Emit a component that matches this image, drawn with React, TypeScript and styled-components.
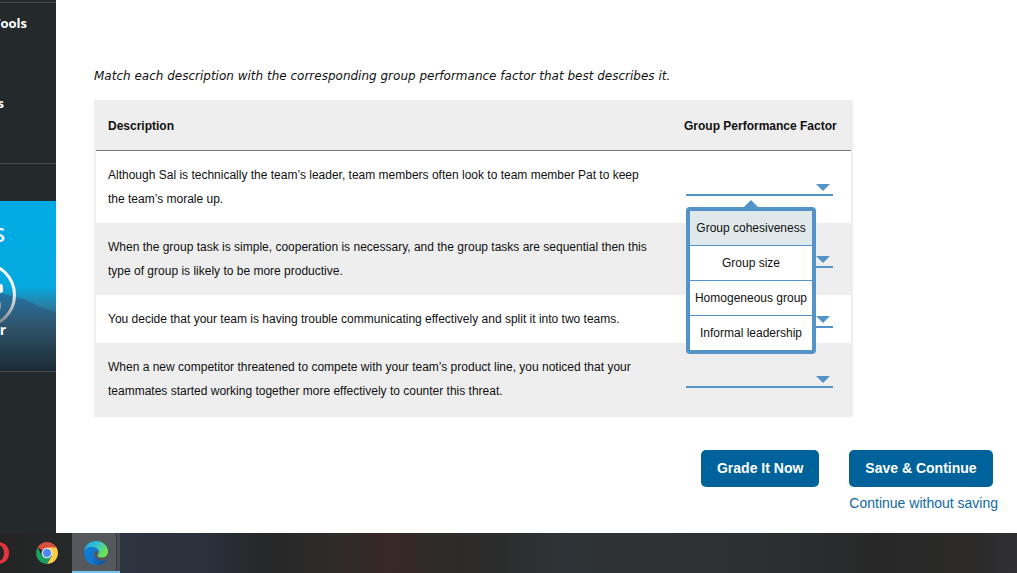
import React, { useState } from "react";
import styled, { createGlobalStyle } from "styled-components";

const Global = createGlobalStyle`
  *, *::before, *::after { box-sizing: border-box; }
  body { margin: 0; background: #fff; color: #111; font-family: "Liberation Sans", Arial, sans-serif; }
`;

const Screen = styled.div`
  min-height: 100vh;
  display: flex;
  flex-direction: column;
`;

const Page = styled.div`
  flex: 1;
  display: flex;
`;

const Sidebar = styled.nav`
  width: 56px;
  flex: none;
  overflow: hidden;
  background: #24292c;
  padding-top: 2px;
`;

const SideGroup = styled.div`
  height: 161px;
  border-top: 1px solid #44494d;
  padding-top: 10px;
`;

const SideLink = styled.a<{ $width: number }>`
  display: flex;
  justify-content: flex-end;
  width: ${(p) => p.$width}px;
  height: 80px;
  white-space: nowrap;
  color: #fff;
  font: 700 13px/20px "Open Sans", sans-serif;
  text-decoration: none;
`;

const SideGap = styled.div`
  height: 38px;
  border-top: 1px solid #44494d;
`;

const Promo = styled.a`
  display: block;
  position: relative;
  height: 171px;
  border-bottom: 1px solid #44494d;
  overflow: hidden;
  color: #fff;
  text-decoration: none;

  svg { display: block; width: 56px; height: 170px; }
`;

const PromoTitle = styled.span`
  position: absolute;
  top: 22px;
  right: 51px;
  font: 600 20px/24px "Open Sans", sans-serif;
`;

const PromoCaption = styled.span`
  position: absolute;
  top: 119px;
  right: 50px;
  font: 700 14px/20px "Open Sans", sans-serif;
  white-space: nowrap;
`;

const Main = styled.main`
  flex: 1;
  min-width: 0;
  padding: 66px 19px 20px 38px;
`;

const Prompt = styled.p`
  margin: 0 0 14px;
  font: italic 12px/20px Verdana, "DejaVu Sans", sans-serif;
`;

const Table = styled.table`
  width: 81%;
  min-width: 759px;
  border: 2px solid #eee;
  border-spacing: 0;
  font-size: 12px;
  line-height: 24px;
`;

const HeadCell = styled.th`
  height: 49px;
  padding: 0 12px;
  background: #eee;
  border-bottom: 1px solid #777;
  text-align: left;
  white-space: nowrap;
`;

const Row = styled.tr`
  &:nth-child(even) { background: #eee; }
`;

const Cell = styled.td`
  padding: 12px 20px 12px 12px;
  vertical-align: middle;
`;

const FactorHead = styled(HeadCell)`
  width: 179px;
`;

const Picker = styled.div`
  position: relative;
  width: 147px;
  height: 18px;
`;

const PickerCell = styled(Cell)`
  padding: 0 14px;
`;

const Select = styled.select`
  appearance: none;
  display: block;
  width: 100%;
  height: 18px;
  border: 0;
  border-bottom: 2px solid #5493c8;
  border-radius: 0;
  background: transparent;
  font: 12px/16px "Liberation Sans", Arial, sans-serif;
  outline: none;
`;

const Caret = styled.span`
  position: absolute;
  top: 6px;
  right: 3px;
  border: 7px solid transparent;
  border-top-color: #5493c8;
  border-bottom: 0;
  pointer-events: none;
`;

const Menu = styled.div`
  position: absolute;
  z-index: 1;
  top: 29px;
  left: 0;
  width: 130px;
  border: 4px solid #5493c8;
  border-radius: 4px;
  background: #fff;

  &::before {
    content: "";
    position: absolute;
    bottom: 100%;
    left: 54px;
    margin-bottom: 4px;
    border: 7px solid transparent;
    border-bottom-color: #5493c8;
    border-top: 0;
  }
`;

const Option = styled.button<{ $active?: boolean }>`
  display: block;
  width: 100%;
  height: 35px;
  padding: 0;
  border: 0;
  border-bottom: 1px solid #5493c8;
  background: ${(p) => (p.$active ? "#dfe8ea" : "#fff")};
  color: #111;
  font: 12px/34px "Liberation Sans", Arial, sans-serif;
  text-align: center;
  white-space: nowrap;

  &:last-child { height: 34px; border-bottom: 0; }
`;

const Actions = styled.div`
  display: flex;
  justify-content: flex-end;
  align-items: flex-start;
  gap: 30px;
  margin-top: 33px;
`;

const SaveColumn = styled.div`
  display: flex;
  flex-direction: column;
  align-items: flex-start;
  gap: 6px;
`;

const Button = styled.button`
  height: 37px;
  padding: 0 16px 2px;
  border: 0;
  border-radius: 5px;
  background: #00629b;
  color: #fff;
  font: 700 14px/20px "Liberation Sans", Arial, sans-serif;
`;

const SkipLink = styled.a`
  color: #10699f;
  font-size: 14px;
  line-height: 20px;
  text-decoration: none;
`;

const Taskbar = styled.footer`
  display: flex;
  height: 40px;
  background: linear-gradient(90deg, #242424 0, #26282a 7%, #2c3440 12%, #2b303c 20%, #262728 26%, #2e2b29 33%, #382826 38%, #2f2b28 43%, #2b2c2b 48%, #2e3337 55%, #2c3032 75%, #282828 86%, #2b2a29 95%, #302f33 100%);
`;

const TaskButton = styled.button<{ $active?: boolean; $align?: string; $width: number }>`
  display: flex;
  align-items: center;
  justify-content: ${(p) => p.$align ?? "center"};
  width: ${(p) => p.$width}px;
  padding: ${(p) => (p.$active ? "2px 0 0" : "0")};
  border: 0;
  border-bottom: ${(p) => (p.$active ? "2px solid #76c8f0" : "0")};
  background: ${(p) => (p.$active ? "linear-gradient(90deg, #55585c 44px, #34393f 44px, #34393f 45px, #494d52 45px)" : "transparent")};
`;

const factors = ["Group cohesiveness", "Group size", "Homogeneous group", "Informal leadership"];

const descriptions = [
  "Although Sal is technically the team’s leader, team members often look to team member Pat to keep the team’s morale up.",
  "When the group task is simple, cooperation is necessary, and the group tasks are sequential then this type of group is likely to be more productive.",
  "You decide that your team is having trouble communicating effectively and split it into two teams.",
  "When a new competitor threatened to compete with your team’s product line, you noticed that your teammates started working together more effectively to counter this threat.",
];

function FactorPicker({ label, initiallyOpen }: { label: string; initiallyOpen: boolean }) {
  const [open, setOpen] = useState(initiallyOpen);
  const [value, setValue] = useState("");
  return (
    <Picker>
      <Select aria-label={label} value={value} onChange={(e) => setValue(e.target.value)}>
        <option value="" />
        {factors.map((f) => <option key={f}>{f}</option>)}
      </Select>
      <Caret />
      {open && (
        <Menu>
          {factors.map((f, i) => (
            <Option key={f} type="button" $active={i === 0} onClick={() => { setValue(f); setOpen(false); }}>{f}</Option>
          ))}
        </Menu>
      )}
    </Picker>
  );
}

const PromoArt = () => (
  <svg viewBox="0 0 56 170" aria-hidden="true">
    <defs>
      <linearGradient id="sky" x1="0" y1="0" x2="0" y2="1">
        <stop offset="0" stopColor="#00abe4" />
        <stop offset=".5" stopColor="#04a9e0" />
        <stop offset=".62" stopColor="#2b7da3" />
        <stop offset="1" stopColor="#1d2a33" />
      </linearGradient>
      <linearGradient id="hill" x1="0" y1="0" x2="0" y2="1">
        <stop offset="0" stopColor="#2373a5" />
        <stop offset=".4" stopColor="#30566f" />
        <stop offset="1" stopColor="#1c2a33" />
      </linearGradient>
      <linearGradient id="ring" x1="0" y1="0" x2="0" y2="1">
        <stop offset=".4" stopColor="#fff" />
        <stop offset="1" stopColor="#777c80" />
      </linearGradient>
    </defs>
    <path fill="url(#sky)" d="M0 0h56v170H0z" />
    <path fill="url(#hill)" d="M0 92l12 3 14 4 12 6 18 6v59H0z" />
    <circle cx="-17" cy="94" r="31.5" fill="none" stroke="url(#ring)" strokeWidth="3" />
    <rect x="-8" y="83" width="11" height="9" rx="3" fill="#fff" />
    <rect x="-8" y="100" width="9" height="9" rx="3" fill="#9a9da0" />
  </svg>
);

const OperaIcon = () => (
  <svg width="9" height="24" viewBox="0 0 9 24" aria-hidden="true">
    <path fill="#e5343c" d="M-3 1C5 1 9 6 9 12S5 23-3 23v-2.500C2 20.500 4 16 4 12S2 3.500-3 3.500z" />
  </svg>
);

const ChromeIcon = () => (
  <svg width="24" height="24" viewBox="0 0 24 24" aria-hidden="true">
    <path fill="#d9503f" d="M12 12L2.500 6.500A11 11 0 0 1 21.500 6.500z" />
    <path fill="#ffce44" d="M12 6.500h9.500A11 11 0 0 1 12 23l4.800-8.300z" />
    <path fill="#1a9f60" d="M2.500 6.500A11 11 0 0 0 12 23l4.800-8.300L12 12 7.200 14.700z" />
    <circle cx="12" cy="12" r="5.3" fill="#f1f1f1" />
    <circle cx="12" cy="12" r="4.2" fill="#4c8bf5" />
  </svg>
);

const EdgeIcon = () => (
  <svg width="24" height="24" viewBox="0 0 24 24" aria-hidden="true">
    <defs>
      <linearGradient id="edgeTop" x1="0" y1="0" x2="1" y2=".5">
        <stop offset="0" stopColor="#1d9fe0" />
        <stop offset=".5" stopColor="#33c1d6" />
        <stop offset="1" stopColor="#6fe34c" />
      </linearGradient>
      <linearGradient id="edgeLow" x1="0" y1="0" x2="1" y2="1">
        <stop offset="0" stopColor="#1583d8" />
        <stop offset="1" stopColor="#0a4f9e" />
      </linearGradient>
    </defs>
    <path fill="url(#edgeTop)" d="M0 11C.5 4.500 5.500 0 12 0c7 0 12 5 12 10.500 0 4-3 6-6.500 6-3 0-4-1-4-2 0-.8 1.300-1 1.300-3.200 0-2.200-2.300-4.800-6.800-4.800-4.500 0-7 2-8 4.500z" />
    <path fill="#127bd1" d="M0 12c0-3.500 3.500-6 8-6 4.500 0 6.800 2.600 6.800 4.800-.8-1-2-1.300-3-1-4 .7-5.500 5.200-3.500 9.200 1 2 3 4 5 4.900C6 24.500 0 19.500 0 12z" />
    <path fill="url(#edgeLow)" d="M11.800 9.800c-1.800 1-2.300 3.700-.8 6 1.500 2.500 4.500 4 7.500 4 1.700 0 3-.6 3.700-.9.500-.2.800.2.500.6C20.500 22.500 17 24.200 13.300 23.900 9.500 23 7 19.500 7 16c0-3 2-5.800 4.800-6.200z" />
  </svg>
);

export default function App() {
  return (
    <Screen>
      <Global />
      <Page>
        <Sidebar>
          <SideGroup>
            <SideLink href="#tools" $width={27}>Tools</SideLink>
            <SideLink href="#s" $width={4}>s</SideLink>
          </SideGroup>
          <SideGap />
          <Promo href="#promo">
            <PromoArt />
            <PromoTitle>S</PromoTitle>
            <PromoCaption>r</PromoCaption>
          </Promo>
        </Sidebar>
        <Main>
          <Prompt>Match each description with the corresponding group performance factor that best describes it.</Prompt>
          <Table>
            <thead>
              <tr>
                <HeadCell scope="col">Description</HeadCell>
                <FactorHead scope="col">Group Performance Factor</FactorHead>
              </tr>
            </thead>
            <tbody>
              {descriptions.map((text, i) => (
                <Row key={text}>
                  <Cell>{text}</Cell>
                  <PickerCell>
                    <FactorPicker label={`Group performance factor ${i + 1}`} initiallyOpen={i === 0} />
                  </PickerCell>
                </Row>
              ))}
            </tbody>
          </Table>
          <Actions>
            <Button type="button">Grade It Now</Button>
            <SaveColumn>
              <Button type="button">Save &amp; Continue</Button>
              <SkipLink href="#continue">Continue without saving</SkipLink>
            </SaveColumn>
          </Actions>
        </Main>
      </Page>
      <Taskbar>
        <TaskButton type="button" aria-label="Opera" $align="flex-start" $width={22}><OperaIcon /></TaskButton>
        <TaskButton type="button" aria-label="Chrome" $width={50}><ChromeIcon /></TaskButton>
        <TaskButton type="button" aria-label="Edge" $active $width={48}><EdgeIcon /></TaskButton>
      </Taskbar>
    </Screen>
  );
}
